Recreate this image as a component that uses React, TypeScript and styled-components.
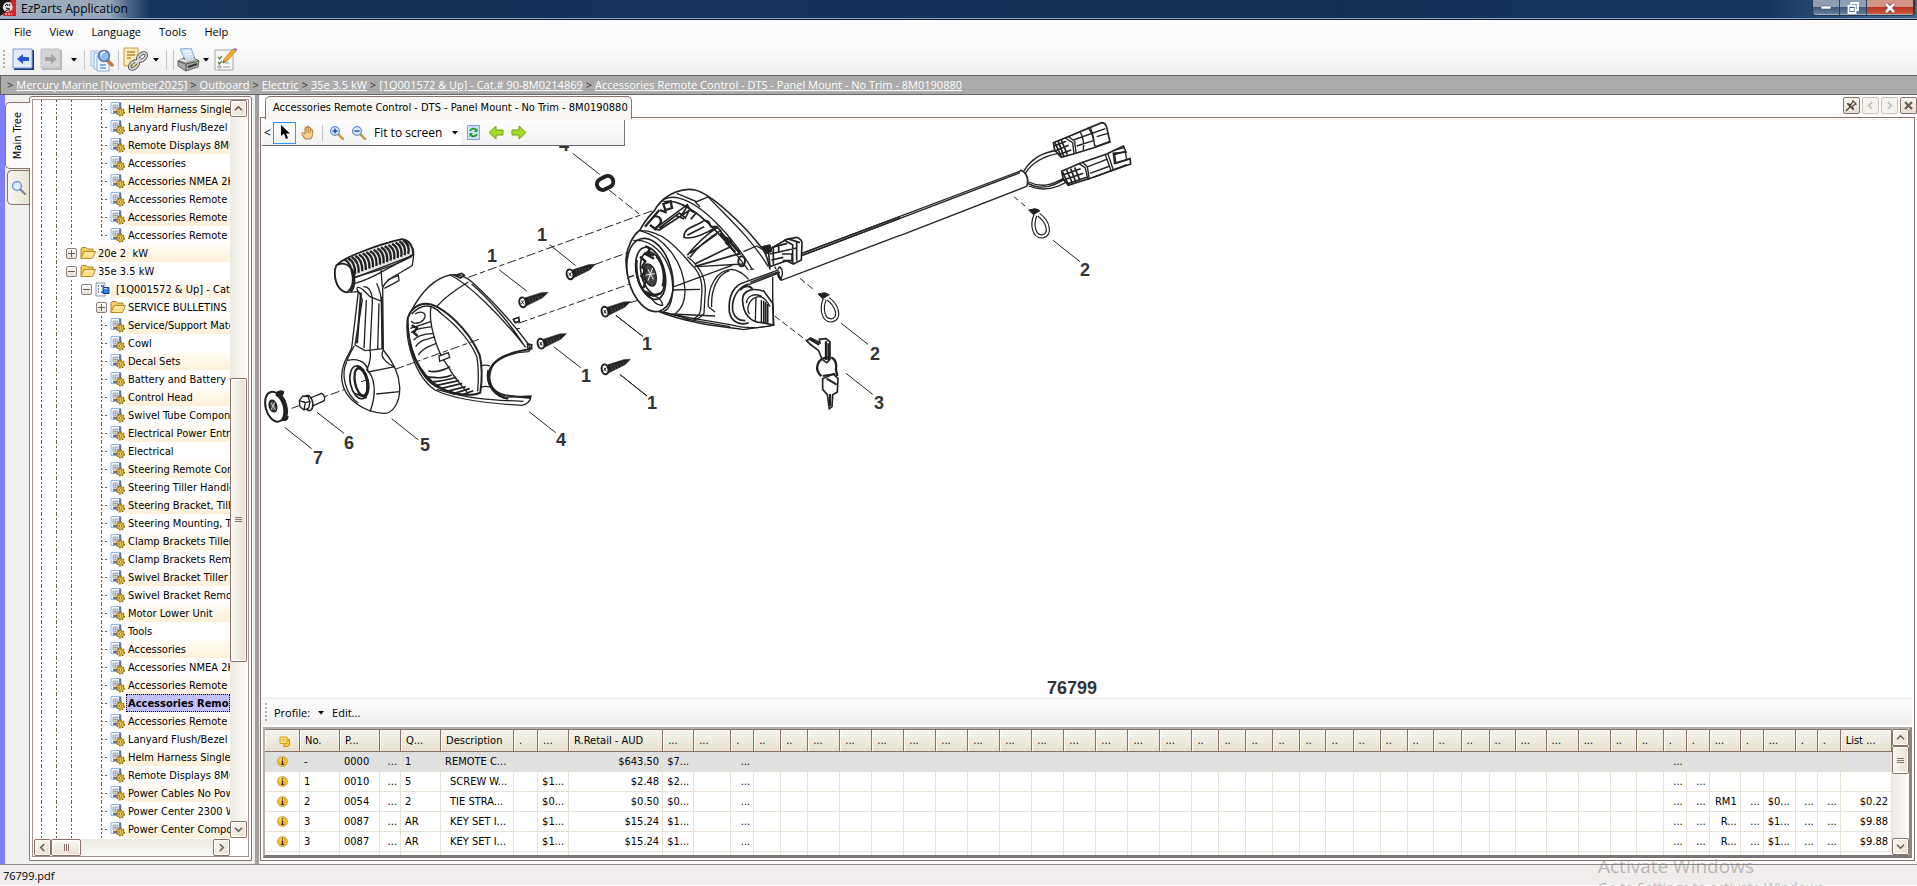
import React from 'react';
import styled, { createGlobalStyle, css } from 'styled-components';

const brown = '#88726a';
const tahoma = '"DejaVu Sans Condensed", "DejaVu Sans", sans-serif';
const segoe = '"Open Sans", "Noto Sans", sans-serif';

const GlobalStyle = createGlobalStyle`
  * { box-sizing: border-box; }
  html, body { margin: 0; height: 100%; }
  #root { height: 100%; }
  body { font: 11px/18px ${tahoma}; color: #000; background: #f0f0f0; overflow: hidden; }
  button, select { font: inherit; color: inherit; margin: 0; padding: 0; border: 0; background: none; }
  button { display: flex; align-items: center; justify-content: center; }
  svg { display: block; flex: none; }
`;

const Window = styled.div`
  position: relative;
  display: flex;
  flex-direction: column;
  height: 100vh;
  overflow: hidden;
`;

/* ---------- title bar ---------- */
const TitleBar = styled.header`
  display: flex;
  height: 20px;
  flex: none;
  border-bottom: 1px solid #10182a;
  box-shadow: inset 0 -1px 0 #8ba3bd;
  background: linear-gradient(90deg, #a3b0c0 0, #97a6b8 110px, #4d678a 128px, #17365e 150px, #133055 280px, #14325a 35%, #122f55 70%, #15355f 92%, #35577f 97%, #48678c 100%);
`;
const AppName = styled.h1`
  flex: 1;
  margin: 0;
  padding-left: 5px;
  font: 12px/18px ${segoe};
`;
const WindowButtons = styled.div`
  display: flex;
  height: 16px;
  margin-right: 2px;
  border: 1px solid #24364e;
  border-top: 0;
  border-radius: 0 0 4px 4px;
  overflow: hidden;
`;
const WindowButton = styled.button<{ $close?: boolean }>`
  width: ${p => (p.$close ? 47 : 27)}px;
  height: 15px;
  border-right: 1px solid #2d3f58;
  box-shadow: inset 0 -1px 0 #9db0c6;
  background: ${p => (p.$close ? 'linear-gradient(#d59386 0 45%, #b8341c 46%, #cf5b3c)' : 'linear-gradient(#8e9fb4 0 45%, #3f5776 46%, #6682a2)')};
`;

/* ---------- menu, toolbar, breadcrumb ---------- */
const MenuBar = styled.nav`
  display: flex;
  flex: none;
  height: 24px;
  padding-left: 14px;
  gap: 18px;
  background: #fbfbfb;
  font: 11px/24px ${segoe};
`;
const MenuItem = styled.button``;

const ToolBar = styled.div`
  display: flex;
  flex: none;
  align-items: center;
  height: 31px;
  padding-left: 3px;
  background: linear-gradient(#fcfcfc, #efefef);
`;
const Grip = styled.span<{ $gap: number }>`
  width: 2px;
  height: 20px;
  margin-right: ${p => p.$gap}px;
  background: repeating-linear-gradient(#b4b4b4 0 2px, transparent 2px 4px);
`;
const ToolButton = styled.button<{ $w: number }>`
  width: ${p => p.$w}px;
  height: 24px;
`;
const Divider = styled.span<{ $h: number }>`
  width: 1px;
  height: ${p => p.$h}px;
  margin: 0 3px;
  background: #c4c4c4;
`;

const Breadcrumb = styled.nav`
  display: flex;
  flex: none;
  gap: 3px;
  height: 20px;
  padding-left: 6px;
  border: 1px solid #666;
  border-right: 0;
  background: #ababab;
  color: #333;
  font: 11px/18px ${segoe};
  white-space: nowrap;
  a { color: #fff; }
`;

/* ---------- main split ---------- */
const Main = styled.main`
  display: flex;
  flex: 1;
  min-height: 0;
`;
const Rail = styled.div`
  flex: none;
  width: 29px;
  padding-top: 7px;
  border-left: 5px solid #8080ff;
`;
const RailTab = styled.button<{ $active?: boolean }>`
  width: ${p => (p.$active ? 25 : 22)}px;
  height: ${p => (p.$active ? 67 : 35)}px;
  margin: 0 0 1px ${p => (p.$active ? 0 : 2)}px;
  position: relative;
  z-index: ${p => (p.$active ? 1 : 0)};
  border: 1px solid ${brown};
  border-right: 0;
  border-radius: 5px 0 0 5px;
  background: ${p => (p.$active ? '#fbfaf8' : 'linear-gradient(90deg, #f8f6f0, #e8e2d2)')};
  span { writing-mode: vertical-rl; transform: rotate(180deg); white-space: nowrap; }
`;
const TreePanel = styled.section`
  display: flex;
  flex: none;
  width: 223px;
  margin: 1px 3px 3px 0;
  padding: 2px 2px 3px;
  border: 1px solid ${brown};
  border-radius: 3px 3px 1px 1px;
  background: #fff;
`;
const TreeFrame = styled.div`
  display: grid;
  grid-template: minmax(0, 1fr) 18px / minmax(0, 1fr) 17px;
  width: 100%;
  padding: 0 1px;
  border: 1px solid #a3938b;
  background: #fff;
`;
const Tree = styled.ul`
  margin: 0;
  padding: 0;
  list-style: none;
  overflow: hidden;
`;
const TreeRow = styled.li`
  display: flex;
  height: 18px;
  white-space: nowrap;
`;
const dots = (dir: string) => `repeating-linear-gradient(${dir}, #6b6246 0 2px, transparent 2px 4px)`;
const Guide = styled.span<{ $kind: string }>`
  flex: none;
  display: flex;
  align-items: center;
  justify-content: center;
  width: 15px;
  background-repeat: no-repeat;
  ${p => p.$kind === 'line' && css`background-image: ${dots('180deg')}; background-size: 1px 18px; background-position: 7px 0;`}
  ${p => p.$kind === 'tee' && css`background-image: ${dots('180deg')}, ${dots('90deg')}; background-size: 1px 18px, 8px 1px; background-position: 7px 0, 7px 9px;`}
  ${p => p.$kind === 'end' && css`background-image: ${dots('180deg')}, ${dots('90deg')}; background-size: 1px 10px, 8px 1px; background-position: 7px 0, 7px 9px;`}
`;
const Expander = styled.button`
  width: 11px;
  height: 11px;
  border: 1px solid #8d8078;
  border-radius: 2px;
  background: linear-gradient(#fff, #e6e0d6);
`;
const IconCell = styled.span`
  flex: none;
  display: flex;
  align-items: center;
  justify-content: center;
  width: 17px;
`;
const TreeLabel = styled.span<{ $shaded: boolean; $selected?: boolean; $pad: number }>`
  flex: 1;
  min-width: 0;
  padding-left: ${p => p.$pad}px;
  line-height: 20px;
  white-space: pre;
  overflow: hidden;
  background: ${p => (p.$shaded ? 'linear-gradient(#fffdf8, #fdf0d9)' : 'none')};
  ${p => p.$selected && css`
    background: #c3c1fb;
    outline: 1px dotted #000;
    outline-offset: -1px;
    font-weight: bold;
  `}
`;

/* ---------- scroll bars ---------- */
const Scroll = styled.div<{ $across?: boolean }>`
  display: flex;
  flex-direction: ${p => (p.$across ? 'row' : 'column')};
  background: linear-gradient(${p => (p.$across ? '180deg' : '90deg')}, #edeae2, #fbfaf7);
  ${p => p.$across && 'margin-top: 1px;'}
`;
const ScrollButton = styled.button`
  flex: none;
  width: 17px;
  height: 17px;
  border: 1px solid ${brown};
  border-radius: 2px;
  box-shadow: inset 0 0 0 1px #fff;
  background: linear-gradient(135deg, #faf8f3, #e5dfd0);
`;
const Track = styled.span<{ $grow: number }>`
  flex: ${p => p.$grow} 1 0;
`;
const Thumb = styled.button<{ $grow?: number; $size?: number; $across?: boolean }>`
  ${p => (p.$grow ? `flex: ${p.$grow} 1 0;` : `flex: none; ${p.$across ? 'width' : 'height'}: ${p.$size}px;`)}
  border: 1px solid ${brown};
  border-radius: 2px;
  box-shadow: inset 0 0 0 1px #fff;
  background: linear-gradient(${p => (p.$across ? '180deg' : '90deg')}, #faf8f3, #e7e1d1);
`;

const Splitter = styled.div`
  flex: none;
  width: 5px;
  border-right: 1px solid #f3f0ec;
  background: #9f9f9f;
`;

/* ---------- document area ---------- */
const Content = styled.section`
  display: flex;
  flex: 1;
  flex-direction: column;
  min-width: 0;
  background: #fff;
`;
const TabStrip = styled.div`
  display: flex;
  flex: none;
  justify-content: space-between;
  height: 22px;
  padding-left: 5px;
`;
const DocumentTab = styled.button`
  position: relative;
  z-index: 1;
  height: 23px;
  margin-top: 1px;
  padding: 0 3px 0 7px;
  border: 1px solid ${brown};
  border-bottom: 0;
  border-radius: 5px 5px 0 0;
  background: #f8f6f3;
`;
const TabButtons = styled.div`
  display: flex;
  gap: 2px;
  padding-top: 2px;
`;
const TabButton = styled.button<{ $off?: boolean }>`
  width: 17px;
  height: 17px;
  border: 1px solid ${p => (p.$off ? '#c9c1bb' : brown)};
  border-radius: 2px;
  color: ${p => (p.$off ? '#c4bcb6' : '#5f4a40')};
  background: ${p => (p.$off ? '#f5f3f0' : 'linear-gradient(#f8f6f1, #e6e0d2)')};
`;
const Panel = styled.div`
  display: flex;
  flex: 1;
  flex-direction: column;
  min-height: 0;
  margin: 0 2px 3px 0;
  padding: 1px 2px 2px 1px;
  border: 1px solid ${brown};
  background: #fff;
`;
const Viewer = styled.div`
  position: relative;
  flex: 1;
  min-height: 0;
  overflow: hidden;
  border-top: 1px solid #f6f3ef;
  border-bottom: 3px solid #f0f0f0;
`;
const FloatBar = styled.div`
  position: absolute;
  left: 0;
  top: 0;
  display: flex;
  align-items: center;
  width: 363px;
  height: 26px;
  border-right: 1px solid #777;
  border-bottom: 1px solid #666;
  background: linear-gradient(#fdfdfd, #f1f1f1);
  font: 12px/24px ${segoe};
`;
const FloatButton = styled.button<{ $on?: boolean; $w: number }>`
  width: ${p => p.$w}px;
  height: 22px;
  border: ${p => (p.$on ? '1px solid #3397ff' : 0)};
`;
const ZoomPicker = styled.label`
  display: flex;
  align-items: center;
  width: 91px;
  height: 24px;
  margin-right: 5px;
  background: #fff;
  select {
    appearance: none;
    flex: 1;
    padding-left: 4px;
    font-size: 12px;
    outline: 0;
  }
  svg { margin-right: 3px; }
`;
const ProfileBar = styled.div`
  display: flex;
  flex: none;
  align-items: center;
  height: 25px;
  padding-left: 3px;
  background: linear-gradient(#fcfcfc, #f0f0f0);
  font: 11px/24px ${segoe};
`;
const ProfileButton = styled.button`
  gap: 8px;
  padding-right: 8px;
`;

/* ---------- parts table ---------- */
const GridFrame = styled.div`
  display: flex;
  flex: none;
  margin: 2px 0 0 1px;
  height: 131px;
  border: 2px solid #a8a4a2;
  border-width: 2px 3px 3px 2px;
  border-color: #b4b0ae #8b8685 #7a7476 #b4b0ae;
  background: #fff;
`;
const GridClip = styled.div`
  flex: 1;
  min-width: 0;
  overflow: hidden;
`;
const Grid = styled.table`
  width: 100%;
  table-layout: fixed;
  border-collapse: separate;
  border-spacing: 0;
`;
const HeadCell = styled.th`
  height: 23px;
  padding: 1px 0 0 5px;
  border: 1px solid ${brown};
  border-left: 0;
  box-shadow: inset 1px 1px 0 #fbfaf6;
  background: linear-gradient(#f6f4ef, #e6e0cf);
  font-weight: normal;
  text-align: left;
  line-height: 20px;
  white-space: nowrap;
  overflow: hidden;
`;
const Cell = styled.td<{ $right?: boolean; $indent?: boolean }>`
  height: 20px;
  padding: 0 3px 0 ${p => (p.$indent ? 9 : 4)}px;
  border-right: 1px solid #e6e2d6;
  border-bottom: 1px solid #e6e2d6;
  line-height: 19px;
  text-align: ${p => (p.$right ? 'right' : 'left')};
  white-space: nowrap;
  overflow: hidden;
`;
const PartRow = styled.tr<{ $current?: boolean }>`
  background: ${p => (p.$current ? '#e0e0e0' : '#fff')};
`;
const Centered = styled.span`
  display: flex;
  justify-content: center;
`;

/* ---------- status ---------- */
const StatusBar = styled.footer`
  flex: none;
  height: 22px;
  padding-left: 3px;
  border-top: 1px solid #8f8b8b;
  border-bottom: 1px solid #fff;
  background: #f0edec;
  font: 11px/22px ${segoe};
`;
const Watermark = styled.aside`
  position: absolute;
  left: 1598px;
  top: 855px;
  color: rgba(130, 125, 125, 0.5);
  font: 19px/22px ${segoe};
  white-space: nowrap;
  pointer-events: none;
  p { margin: 0; }
  p + p { font-size: 14px; line-height: 22px; }
`;

/* ---------- small icons ---------- */
const Caret = () => <svg width="6" height="4" viewBox="0 0 6 4"><path d="M0 0h6L3 3.5z" /></svg>;

const Chevron = ({ turn = 0, color = '#6d5a50' }) => (
  <svg width="9" height="9" viewBox="0 0 9 9" fill="none" stroke={color} strokeWidth="1.6">
    <path d="M1 6.2 4.5 2.8 8 6.2" transform={`rotate(${turn} 4.5 4.5)`} />
  </svg>
);

const Ribs = ({ turn = 0 }) => (
  <svg width="9" height="9" viewBox="0 0 9 9" stroke="#88726a">
    <path d="M1 2.5h7M1 4.5h7M1 6.5h7" transform={`rotate(${turn} 4.5 4.5)`} />
  </svg>
);

const LogoIcon = () => (
  <svg width="16" height="16" viewBox="0 0 16 16">
    <path d="M0 0h16v16H4L0 12z" fill="#d5232b" />
    <path d="M0 0h11L8 6l-5 8-3 2z" fill="#151515" />
    <path d="M3 6C4 2 9 1 11 3s2 5 1 7l-4 2c-3 0-6-3-5-6z" fill="#ddd" />
    <path d="M5 6l2-2 1 2M9 4l1 2M6 8l4 1M7 10h3M4 13l3-3" stroke="#111" fill="none" />
    <path d="M5 14h7" stroke="#fff" strokeDasharray="2 1" />
  </svg>
);

const NavIcon = ({ forward = false }) => (
  <svg width="23" height="23" viewBox="0 0 23 23">
    <path d="M2 2h20v20H2z" fill={forward ? '#b9b9b9' : '#1d3b86'} />
    <path d="M1 1h19v19H1z" fill={forward ? '#d4d4d4' : '#e3ebf8'} stroke={forward ? '#c2c2c2' : '#7d9bd0'} />
    <path
      d="M5 11l6-5v3h6v4h-6v3z"
      fill={forward ? '#a3a3a3' : '#2456dd'}
      transform={forward ? 'rotate(180 11 11)' : undefined}
    />
  </svg>
);

const FindPagesIcon = () => (
  <svg width="24" height="24" viewBox="0 0 24 24">
    <path d="M1 3h11v15H1z" fill="#e9f1fc" stroke="#9dbbe4" />
    <path d="M4 5h12v16H4z" fill="#eef5fe" stroke="#8fb1df" />
    <path d="M7 8h12v15H7z" fill="#f6faff" stroke="#86a9da" />
    <path d="M10 17h6M10 20h6" stroke="#5b95dc" strokeWidth="1.5" />
    <path d="M17 12l5 5" stroke="#c9743a" strokeWidth="3.4" strokeLinecap="round" />
    <circle cx="14" cy="8" r="5.4" fill="#8fbdf0" stroke="#56789f" strokeWidth="1.6" />
    <path d="M11 7c0-2 2-3 4-3" stroke="#fff" strokeWidth="1.4" fill="none" />
  </svg>
);

const LinkNoteIcon = () => (
  <svg width="25" height="25" viewBox="0 0 25 25">
    <path d="M1 1h14v13l-4 5H1z" fill="#fbe9be" stroke="#cf9c3c" />
    <path d="M4 5h8M4 8h8M4 11h4" stroke="#b88432" strokeWidth="1.5" />
    <g fill="none" stroke="#555" strokeWidth="3.6">
      <ellipse cx="19" cy="10" rx="3" ry="5" transform="rotate(48 19 10)" />
      <ellipse cx="11" cy="18" rx="3" ry="5" transform="rotate(48 11 18)" />
      <path d="M12 17l6-6" />
    </g>
    <g fill="none" stroke="#d8d8d8" strokeWidth="1.8">
      <ellipse cx="19" cy="10" rx="3" ry="5" transform="rotate(48 19 10)" />
      <ellipse cx="11" cy="18" rx="3" ry="5" transform="rotate(48 11 18)" />
      <path d="M12 17l6-6" />
    </g>
  </svg>
);

const PrinterIcon = () => (
  <svg width="24" height="24" viewBox="0 0 24 24">
    <path d="M3 1l11-1 4 11-9 3z" fill="#cfe2fb" stroke="#86a9d8" />
    <path d="M7 4l7-1M8 7l7-1" stroke="#fff" />
    <path d="M1 13l6-3 1 3 9-3 5 3-1 6-12 4-8-5z" fill="#aaa" stroke="#666" />
    <path d="M1 13l8 3 13-3M9 16v7" stroke="#555" fill="none" />
    <path d="M2 12l6 2 11-3-3-1-8 2-2-1z" fill="#e4e4e4" />
    <path d="M11 19l9-3" stroke="#333" strokeWidth="2" />
    <circle cx="19" cy="14" r="1" fill="#5fd04a" />
  </svg>
);

const ChecklistIcon = () => (
  <svg width="24" height="24" viewBox="0 0 24 24">
    <path d="M1 2h18v20H1z" fill="#f7f7f7" stroke="#a5a5a5" />
    <path d="M4 9l1.500 2 2.500-3M4 14l1.500 2 2.500-3" stroke="#4a8a3c" strokeWidth="1.300" fill="none" />
    <path d="M4 18h3v2H4zM9 19h7M11 15h4" stroke="#999" fill="none" />
    <path d="M9 15l1-4L19 1l3 2-9 10z" fill="#f6a53d" stroke="#c97a1e" strokeWidth=".8" />
    <path d="M19 1l3 2 1.500-1.800L21 0z" fill="#9b6ac9" />
    <path d="M9 15l.6-2.200 1.400 1.200z" fill="#333" />
  </svg>
);

const AssemblyIcon = () => (
  <svg width="16" height="16" viewBox="0 0 16 16">
    <path d="M1 1.500h10v11H1z" fill="#fff" stroke="#8db5ea" />
    <path d="M3 4h5v5H3z" fill="#dfe6ef" stroke="#8a97a8" strokeWidth=".8" />
    <path d="M3 6.500h5M5.500 4v5" stroke="#8a97a8" strokeWidth=".7" />
    <path d="M10 2v7M3 11h5" stroke="#35477d" strokeWidth="1.400" />
    <circle cx="10.500" cy="11" r="3.600" fill="#f3c93d" stroke="#8f6a12" strokeWidth="1.800" strokeDasharray="1.600 1.100" />
    <circle cx="10.500" cy="11" r="3" fill="#f3c93d" stroke="#a87f1d" strokeWidth=".7" />
    <circle cx="10.500" cy="11" r="1.200" fill="#fff" stroke="#7e5d10" strokeWidth=".8" />
  </svg>
);

const FolderIcon = () => (
  <svg width="16" height="14" viewBox="0 0 16 14">
    <path d="M1 12.500V3l1-1.500h4L7.500 3H13v3" fill="#f2cd62" stroke="#a98020" />
    <path d="M1 12.500L4 5.500h11.500L12.500 12.500z" fill="#ffe08a" stroke="#b88c26" />
    <path d="M5 7h8" stroke="#fff4c8" />
  </svg>
);

const CatalogIcon = () => (
  <svg width="15" height="15" viewBox="0 0 15 15">
    <path d="M1 1h9v13H1z" fill="#f5f7fa" stroke="#8d99a8" />
    <path d="M3 4h1M3 7h1M3 10h1M6 4h3M6 10h2" stroke="#39547e" strokeWidth="1.400" />
    <path d="M8 5.500h6v6H8z" fill="#2f86ee" stroke="#123f86" />
    <path d="M9 6.500h3" stroke="#b7d9ff" />
  </svg>
);

const MagnifierIcon = ({ sign = '' }) => (
  <svg width="16" height="16" viewBox="0 0 16 16">
    <path d="M9 9l5 5" stroke={sign ? '#c98f3e' : '#7f8a95'} strokeWidth="2.400" strokeLinecap="round" />
    <circle cx="6" cy="6" r="4.400" fill="#dbeafd" stroke="#5f90cc" strokeWidth="1.300" />
    {sign && <path d={sign === '+' ? 'M3.500 6h5M6 3.500v5' : 'M3.500 6h5'} stroke="#1c4fa8" strokeWidth="1.500" />}
  </svg>
);

const PointerIcon = () => (
  <svg width="10" height="15" viewBox="0 0 10 15"><path d="M1 0v11l3-2.500L6 14l2-1-2-4.500h4z" /></svg>
);

const HandIcon = () => (
  <svg width="14" height="16" viewBox="0 0 14 16">
    <path d="M4 14L1 9c-1-1 .500-2 1.500-1L4 9V3c0-1 1.600-1 1.800 0V2c0-1.200 1.800-1.200 1.800 0v1c.2-1 1.800-1 1.800.2V4.500c.3-.8 1.800-.8 1.800.3 1 4 .6 6-1.200 9z" fill="#f6d28a" stroke="#a8782c" />
    <path d="M5.800 3v5M7.600 3v5M9.400 4.500V8" stroke="#a8782c" strokeWidth=".7" />
  </svg>
);

const RefreshIcon = () => (
  <svg width="13" height="15" viewBox="0 0 13 15">
    <path d="M.5.5h12v14H.5z" fill="#cfe0f8" stroke="#7fa3d4" />
    <path d="M3 6c1-3 5-3 6-1M10 9c-1 3-5 3-6 1" stroke="#1f9a2a" strokeWidth="1.800" fill="none" />
    <path d="M10.500 3v4H7zM2.500 12V8H6z" fill="#1f9a2a" />
  </svg>
);

const GreenArrow = ({ right = false }) => (
  <svg width="16" height="15" viewBox="0 0 16 15">
    <path d="M1 7.500L8 1v4h7v5H8v4z" fill="#a4dc23" stroke="#6ea411" transform={right ? 'rotate(180 8 7.500)' : undefined} />
  </svg>
);

const NotesIcon = () => (
  <svg width="12" height="11" viewBox="0 0 12 11">
    <path d="M5 3.500h5.500V9L9 10.500H5z" fill="#f6c93b" stroke="#c2920f" />
    <path d="M1 1h7v6.500H1z" fill="#ffec9c" stroke="#d3a012" />
    <path d="M2.500 3h4M2.500 5h4" stroke="#c79a1c" strokeWidth=".8" />
  </svg>
);

const InfoIcon = () => (
  <svg width="11" height="11" viewBox="0 0 11 11">
    <circle cx="5.500" cy="5.500" r="5" fill="#f0b92d" stroke="#cf9a33" strokeWidth=".8" />
    <circle cx="4.500" cy="3.800" r="2.500" fill="#fbe08e" opacity=".6" />
    <path d="M5.500 2v1.500M4.500 5h1v3M4.300 8.300h2.600" stroke="#3d2a05" strokeWidth="1.200" fill="none" />
  </svg>
);

const PinIcon = () => (
  <svg width="13" height="13" viewBox="0 0 13 13" fill="none" stroke="#4e3c34" strokeWidth="1.100">
    <path d="M1 12l4-4M7.500 1.500l4 4M8 2L6 5.500 3 5l5 5-.5-3L11 5M4 7L7 4.500" />
    <path d="M2.500 4.500l6 6" strokeWidth="1.400" />
  </svg>
);

/* ---------- exploded view ---------- */
const range = (n: number) => Array.from({ length: n }, (_, i) => i);

const Screw = ({ x, y }: { x: number; y: number }) => (
  <g transform={`translate(${x} ${y})`}>
    <path d="M4 -12 L56 -29 L76 -30 L60 -14 L8 12z" fill="#222" stroke="#222" strokeWidth="2" strokeLinejoin="round" />
    <path d="M18 -13l6 16M27 -15l5 14M36 -17l4 12M45 -19l4 10M54 -22l3 8" stroke="#888" strokeWidth="1.200" />
    <ellipse rx="10" ry="15" transform="rotate(-12)" fill="#fff" strokeWidth="6" />
    <path d="M-4 -5L4 6M4 -6L-4 5" strokeWidth="3" />
  </g>
);

const TieStrap = ({ x, y }: { x: number; y: number }) => (
  <g transform={`translate(${x} ${y})`}>
    <path d="M4 10C-8 40 0 76 26 73C52 68 44 30 14 8" strokeWidth="13" />
    <path d="M4 10C-8 40 0 76 26 73C52 68 44 30 14 8" stroke="#fff" strokeWidth="6" />
    <path d="M-16 -6L4 -10 18 -4 -2 8z" fill="#222" strokeWidth="3" />
  </g>
);

const HandleAndCowl = () => (
  <g transform="translate(255 110) scale(.33333)">
    <path
      strokeWidth="3"
      d="M953 130L1034 193M884 404L962 467M733 480L815 543M1083 616L1163 679M896 710L977 773M1096 794L1176 858M822 905L902 968M410 926L490 990M186 907L267 970M89 952L170 1016"
    />
    <path strokeWidth="3" strokeDasharray="28 9 16 9" d="M640 502L1240 285M1062 240L1155 314M1018 464L1115 429M790 640L1130 520M1125 578L1180 562M110 895L270 838M420 778L680 685" />
    <path strokeWidth="3" d="M660 690C710 672 750 662 795 655" />
    <rect x="1025" y="202" width="51" height="34" rx="17" transform="rotate(-27 1050 219)" strokeWidth="12" />

    <Screw x={945} y={493} />
    <Screw x={803} y={577} />
    <Screw x={858} y={701} />
    <Screw x={1050} y={605} />
    <Screw x={1050} y={778} />

    {/* end cap */}
    <g>
      <path d="M62 848l14-6 10 2-2 10-12 6M84 918l16 2-4 10-16 2" fill="#222" strokeWidth="3" />
      <ellipse cx="60" cy="890" rx="28" ry="46" transform="rotate(-16 60 890)" fill="#fff" strokeWidth="6" />
      <path d="M64 850C88 862 100 904 86 930" strokeWidth="14" />
      <ellipse cx="54" cy="888" rx="10" ry="17" transform="rotate(-16 54 888)" fill="#555" strokeWidth="6" />
      <path d="M48 878l14 22M60 876l-12 24" stroke="#fff" strokeWidth="2" />
    </g>

    {/* bolt */}
    <path d="M166 864L200 850Q212 858 208 872L172 888z" fill="#fff" strokeWidth="4" />
    <ellipse cx="160" cy="879" rx="13" ry="23" transform="rotate(-12 160 879)" fill="#fff" strokeWidth="5" />
    <path d="M133 872l10-14 16 2 6 16-4 18-14 6-12-10zM133 872l18 6 14-4M151 878l-4 22" fill="#fff" strokeWidth="4" />

    {/* handle */}
    <g strokeWidth="4">
      <path d="M245 465C270 438 380 400 440 387C464 388 478 412 476 436L472 466C440 490 390 505 383 535L385 720C410 750 432 790 434 830C436 880 410 914 385 910C330 906 262 870 260 800C260 765 275 745 290 715L310 545L275 547C245 540 236 510 240 478z" fill="#fff" />
      <path d="M250 462C275 438 380 402 440 388C462 390 474 412 474 432C440 462 370 480 300 502C298 480 284 462 250 462z" fill="#e8e8e8" />
      {range(17).map(i => (
        <path key={i} d={`M${268 + i * 11} ${448 - i * 3.6}q22 12 ${22 - i * 0.4} ${48 - i * 0.4}`} strokeWidth="7" />
      ))}
      <path d="M244 466C262 456 284 462 290 482C296 510 292 536 276 547C250 545 238 512 240 480z" fill="#fff" strokeWidth="5" />
      <path d="M290 480C300 500 300 530 286 545" strokeWidth="9" />
      <path d="M300 503L474 436M300 520C360 505 380 480 470 440M310 545C300 530 310 528 325 540L345 560L382 575M325 530C345 530 352 550 352 578L345 720C350 750 340 770 335 780M365 520C378 550 378 560 382 600M378 480L382 530M398 510L430 496L432 512L388 535M312 545L322 570L300 705L330 722L385 716M334 570L327 715M372 580L368 720M298 708C285 730 280 740 276 752C300 745 335 750 340 786L420 770M335 780C360 800 366 850 345 905M364 852L434 845M385 720C372 740 395 760 420 772" />
      <path d="M318 548L306 700M380 560L382 716" strokeWidth="6" />
      <path d="M275 755C258 790 268 850 310 880" />
      <ellipse cx="313" cy="817" rx="27" ry="50" transform="rotate(-12 313 817)" strokeWidth="5" />
      <ellipse cx="318" cy="816" rx="18" ry="42" transform="rotate(-12 318 816)" strokeWidth="7" />
      <path d="M305 770C330 770 345 815 332 862L310 850M298 850L335 864" strokeWidth="5" />
      <path d="M318 815L340 808" strokeWidth="3" />
    </g>

    {/* cowl */}
    <g strokeWidth="4">
      <path d="M470 600C500 545 540 505 585 495C610 490 640 505 650 515C700 560 770 635 822 705C828 712 826 722 820 725C780 726 735 740 715 765C690 810 712 850 750 862L828 858C828 872 815 884 800 886C690 880 590 865 540 840C480 800 448 690 458 625z" fill="#fff" />
      <path d="M458 625C470 585 510 570 545 590C600 620 650 680 674 735C682 770 680 820 676 848C650 862 590 852 545 830C490 800 456 700 458 625z" strokeWidth="6" />
      <path d="M470 612C500 580 530 580 560 612C610 650 650 700 666 742C672 780 670 820 668 844" />
      <path d="M545 590C570 560 600 540 640 516M676 768C690 764 700 766 705 768M678 832C690 826 700 830 712 832M585 495C640 520 740 620 812 712M650 522C700 565 765 640 806 704" />
      <path d="M824 718C770 726 720 744 706 775C692 815 712 848 750 856L828 864M700 780C690 830 725 862 760 866" strokeWidth="6" />
      <path d="M600 496l20-6 8 6-12 8zM775 628l16-6 2 12-12 4zM818 702l12 2v12l-12-2z" strokeWidth="5" />
      <path d="M528 590C520 630 540 720 580 770C600 810 625 830 640 852M480 612C500 600 520 610 505 630C490 645 470 640 470 632M466 655L530 634M468 668C490 650 510 655 530 650M476 690C495 670 520 672 536 670M482 710C500 684 520 690 540 680M490 735C510 706 530 710 545 698" />
      <path d="M470 646l16 8-10 14 12 10" strokeWidth="7" />
      <path strokeWidth="3" strokeDasharray="28 9 16 9" d="M470 760L680 685" />
      <path d="M552 738l28-10 4 14-30 12z" fill="#fff" />
      <path d="M520 782C540 790 570 780 585 770M512 800C550 805 570 805 590 795M535 815C560 815 590 806 604 802M545 826L612 812M556 836L622 820M575 844L632 830M598 850L644 836M620 854L655 842" strokeWidth="5" />
      <path d="M464 700C480 770 530 835 600 852" strokeWidth="7" />
      <path d="M545 838C640 866 700 870 806 874" />
    </g>
  </g>
);

const ControlHead = () => (
  <g transform="translate(600 110) scale(.33333)">
    <path strokeWidth="3" d="M47 616L128 679M60 794L141 858M724 640L804 703M738 790L818 853" />
    <path strokeWidth="3" strokeDasharray="20 9" d="M600 505L645 542M524 618L620 692" />

    {/* harness stub and plug */}
    <path d="M505 420L560 388 590 382Q606 388 606 400L604 450 580 462 560 452 510 470z" fill="#fff" strokeWidth="5" />
    <path d="M516 412L562 400M510 432L590 414M514 450L550 442M552 390L578 404V460M562 386L600 398M546 432h30v20h-28M590 392V452M520 410v54M536 404v20" strokeWidth="5" />
    <path d="M484 410l26-6 6 20-18 8z" fill="#222" strokeWidth="3" />
    <path d="M606 430L900 320M606 436L900 325" strokeWidth="4" />
    <path d="M538 470C530 480 530 500 544 511L900 376M538 470C552 480 548 500 540 511M524 470L545 510" strokeWidth="4" />

    {/* mounting body */}
    <path d="M120 360C140 320 165 305 170 290C200 250 250 232 285 240C330 250 430 340 490 420C508 450 516 490 517 560L520 645L430 658C360 650 260 640 165 600C110 570 78 520 78 450C80 410 100 375 120 360z" fill="#fff" strokeWidth="5" />
    <path d="M175 285C190 262 215 258 240 265C310 285 400 380 465 492M190 275C260 262 350 350 452 490M230 250L290 275L326 260M320 256C380 320 450 380 505 470M430 425L470 408L490 420M285 275L300 290" strokeWidth="4" />
    <path d="M190 282l22-8 4 20-20 6zM180 300l20 8M160 320C175 315 200 330 165 356" strokeWidth="7" />
    <path d="M165 356L262 284L270 300L178 360zM262 284L255 300 240 322M240 310l16 14 12-24 20 10-16 18M230 318l22 8M178 354L240 308" strokeWidth="5" />
    <path d="M252 382C250 350 290 350 312 332Q330 330 332 350L350 350C320 372 270 390 252 382zM262 376L312 350M262 436C290 400 325 370 352 352L362 362C330 382 292 412 270 442M270 430L350 372M284 462C330 440 370 420 392 410L372 384 362 362M284 470L420 430M360 372l40 34 20 26-30 6M372 382l18 4 8 20" strokeWidth="5" />
    <path d="M362 368L420 428M376 396l30 30M170 360L150 345M135 350L178 300" strokeWidth="7" />
    <ellipse cx="425" cy="454" rx="10" ry="15" strokeWidth="6" />
    <ellipse cx="456" cy="486" rx="6" ry="9" strokeWidth="5" />
    <path d="M120 362C200 360 250 440 285 475Q306 500 306 540L302 600Q298 625 270 628L190 606M290 470L430 462M210 540L300 538M222 530L400 465" strokeWidth="4" />
    <path d="M262 440Q316 480 316 540L312 610Q300 626 280 630" strokeWidth="4" />

    {/* bezel */}
    <ellipse cx="150" cy="495" rx="66" ry="112" transform="rotate(-14 150 495)" fill="#fff" strokeWidth="5" />
    <path d="M100 392C150 385 200 430 215 500C225 560 210 600 190 604M120 362C190 380 250 450 255 540Q256 590 225 612" strokeWidth="4" />
    <ellipse cx="152" cy="490" rx="42" ry="80" transform="rotate(-14 152 490)" strokeWidth="5" />
    <ellipse cx="158" cy="490" rx="34" ry="66" transform="rotate(-14 158 490)" strokeWidth="5" />
    <ellipse cx="150" cy="495" rx="18" ry="34" transform="rotate(-14 150 495)" fill="#444" strokeWidth="4" />
    <path d="M120 440l16 14-10 18 12 10-14 16 14 14-8 22M136 408l14 8-8 14 20 6M132 430l30 16M135 545l24 12 26-8M110 450C105 500 120 540 150 560M170 440C190 460 196 500 188 530" strokeWidth="7" />
    <path d="M144 478l16 30M158 474l-14 38M138 495l26-4" stroke="#fff" strokeWidth="3" />
    <path d="M86 502l16-6M160 556Q185 565 188 585Q170 590 150 560" strokeWidth="4" />

    {/* key switch */}
    <path d="M430 480L540 478 520 500V645L430 656 350 640 325 590C322 530 350 480 395 478z" fill="#fff" stroke="none" />
    <path d="M345 606L325 590C322 530 350 480 395 478C415 480 432 492 446 508M335 592C332 535 355 492 388 482M518 500V640" strokeWidth="4" />
    <path d="M436 516C400 524 384 560 388 606C394 636 420 648 446 638M446 522C412 532 394 566 398 602Q406 632 436 632" fill="#fff" strokeWidth="5" />
    <path d="M436 516L535 480M446 524L540 488M450 517L538 484" strokeWidth="4" />
    <path d="M420 540C440 520 460 530 456 545" strokeWidth="6" />
    <path d="M428 575C424 540 460 532 492 544L518 580 521 645 486 638C450 638 430 610 428 575z" fill="#fff" strokeWidth="5" />
    <path d="M440 580C440 556 466 548 486 560M448 612C438 596 446 570 468 562L466 634M468 562Q490 552 510 590M484 570V636M520 590V645" strokeWidth="4" />
    <path d="M491 572V638M497 576V639M503 582V640" strokeWidth="5" />
    <path d="M180 604C260 625 330 632 400 646Q450 660 518 646M250 626L390 650M215 612L345 618" strokeWidth="4" />

    <TieStrap x={670} y={558} />

    {/* keys */}
    <path d="M620 692l12-8 28 14-2-10 20-2 12 10v52l-10 10-14-10-10-26-26-20z" fill="#fff" strokeWidth="5" />
    <path d="M628 686l30 18M678 694V750M686 700V750" strokeWidth="7" />
    <path d="M686 742C650 742 642 780 664 798M694 742Q712 752 708 780L712 798" strokeWidth="7" />
    <path d="M668 806L700 792L714 806L712 846L698 854 696 890 688 896 682 854 668 838z" fill="#fff" strokeWidth="5" />
    <path d="M668 798L706 792M680 806L710 824M690 852V888" strokeWidth="6" />
  </g>
);

const Harness = () => (
  <g transform="translate(760 110) scale(.33333)">
    <path d="M125 430L786 181M128 436L780 188" strokeWidth="4" />
    <path d="M420 377L800 229" strokeWidth="4" />
    <path d="M780 180C800 185 808 210 800 229" strokeWidth="5" />
    <path d="M790 186C810 150 840 130 895 118M796 190C815 158 845 140 895 130M792 182C820 140 850 128 890 122" strokeWidth="4" />
    <path d="M804 220C840 240 880 236 930 196M806 228C850 246 890 238 934 206M806 216C840 232 870 230 920 200" strokeWidth="4" />

    <path d="M880 98L915 84 1025 38Q1036 38 1040 52L1050 96 1006 112 940 132 904 142 884 120z" fill="#fff" strokeWidth="5" />
    <path d="M884 96l20 44M894 92l18 48M904 90l18 44M882 108l36-14M886 122l40-16M894 134l40-14" strokeWidth="5" />
    <path d="M916 84l22 14 4 34M926 80l18 14 4 34M960 64Q974 90 970 120M984 52L996 72 1006 112M992 54Q1002 80 1004 108M940 90L1036 56M950 108L1000 92M1010 80L1044 70M1006 110L1050 94" strokeWidth="4" />

    <path d="M905 184L960 160 1040 132 1090 108 1098 126 1060 130 1064 160 1110 146 1112 162 1000 202 925 226 910 208z" fill="#fff" strokeWidth="5" />
    <path d="M908 186l18 40M920 180l18 42M932 176l16 42M944 172l16 40M906 196l56-20M910 210l60-20M920 222l60-20" strokeWidth="5" />
    <path d="M956 160l20 14 8 36M966 156l16 14 6 38M1036 134L1054 184M1044 132L1060 180M984 170L1040 148M990 190L1050 168M1064 134L1096 124 1100 150 1068 160zM1060 122L1094 112M1000 202L1100 164" strokeWidth="4" />

    <path d="M762 260L806 297" strokeWidth="3" strokeDasharray="16 12" />
    <path d="M879 391L960 455" strokeWidth="3" />
    <TieStrap x={822} y={306} />
  </g>
);

const callouts: [string, number, number][] = [
  ['4', 559, 151], ['1', 537, 241], ['1', 487, 262], ['1', 642, 350], ['1', 581, 382], ['1', 647, 409],
  ['2', 870, 360], ['3', 874, 409], ['4', 556, 446], ['5', 420, 451], ['6', 344, 449], ['7', 313, 464],
  ['2', 1080, 276], ['76799', 1047, 694],
];

const ExplodedView = () => (
  <svg width="100%" height="100%" role="img" aria-label="Exploded view 76799">
    <g transform="translate(-262 -120)" fill="none" stroke="#222">
      <HandleAndCowl />
      <ControlHead />
      <Harness />
      <g stroke="none" fill="#333" fontFamily='"Liberation Sans", sans-serif' fontWeight="bold" fontSize="18">
        {callouts.map(([t, x, y], i) => <text key={i} x={x} y={y}>{t}</text>)}
      </g>
    </g>
  </svg>
);

/* ---------- tree ---------- */
type Node = { text: string; guides: string[]; icon: 'leaf' | 'folder' | 'catalog'; sign?: '+' | '-'; selected?: boolean };
const leaf = (text: string, end = false): Node => ({ text, guides: ['line', 'line', 'line', 'none', end ? 'end' : 'tee'], icon: 'leaf' });

const nodes: Node[] = [
  ...['Helm Harness Single C', 'Lanyard Flush/Bezel M', 'Remote Displays 8M0', 'Accessories', 'Accessories NMEA 2K', 'Accessories Remote C', 'Accessories Remote C'].map(t => leaf(t)),
  leaf('Accessories Remote C', true),
  { text: '20e 2  kW', guides: ['line', 'line'], icon: 'folder', sign: '+' },
  { text: '35e 3.5 kW', guides: ['line', 'line'], icon: 'folder', sign: '-' },
  { text: '[1Q001572 & Up] - Cat.', guides: ['line', 'line', 'line'], icon: 'catalog', sign: '-' },
  { text: 'SERVICE BULLETINS', guides: ['line', 'line', 'line', 'none'], icon: 'folder', sign: '+' },
  ...['Service/Support Mate', 'Cowl', 'Decal Sets', 'Battery and Battery C', 'Control Head', 'Swivel Tube Compone', 'Electrical Power Entry', 'Electrical', 'Steering Remote Con', 'Steering Tiller Handle', 'Steering Bracket, Tille', 'Steering Mounting, Ti', 'Clamp Brackets Tiller H', 'Clamp Brackets Remo', 'Swivel Bracket Tiller H', 'Swivel Bracket Remot', 'Motor Lower Unit', 'Tools', 'Accessories', 'Accessories NMEA 2K', 'Accessories Remote C'].map(t => leaf(t)),
  { ...leaf('Accessories Remo'), selected: true },
  ...['Accessories Remote C', 'Lanyard Flush/Bezel M', 'Helm Harness Single C', 'Remote Displays 8M0', 'Power Cables No Pow', 'Power Center 2300 W', 'Power Center Compo'].map(t => leaf(t)),
];

const TreeItem = ({ node, index }: { node: Node; index: number }) => (
  <TreeRow role="treeitem" aria-selected={!!node.selected}>
    {node.guides.map((g, i) => <Guide key={i} $kind={g} />)}
    {node.sign && (
      <Guide $kind="none">
        <Expander aria-label={node.sign === '+' ? 'Expand' : 'Collapse'}>
          <svg width="7" height="7" viewBox="0 0 7 7" stroke="#6d5a50"><path d={node.sign === '+' ? 'M0 3.500h7M3.500 0v7' : 'M0 3.500h7'} /></svg>
        </Expander>
      </Guide>
    )}
    <IconCell>
      {node.icon === 'leaf' && <AssemblyIcon />}
      {node.icon === 'folder' && <FolderIcon />}
      {node.icon === 'catalog' && <CatalogIcon />}
    </IconCell>
    <TreeLabel $shaded={index % 2 === 0} $selected={node.selected} $pad={node.icon === 'catalog' ? 5 : 2}>{node.text}</TreeLabel>
  </TreeRow>
);

/* ---------- parts table data ---------- */
const columns: [string, number][] = [
  ['notes', 35], ['No.', 40], ['P...', 40], ['', 21], ['Q...', 40], ['Description', 73], ['.', 24], ['...', 31],
  ['R.Retail - AUD', 94], ['...', 31], ['...', 37], ['.', 23], ['..', 27], ['..', 27],
  ...range(12).map((): [string, number] => ['...', 32]),
  ...[27, 27, 27, 27, 26, 27, 27, 27, 26, 28, 28, 26].map((w): [string, number] => ['..', w]),
  ['...', 31], ['...', 32], ['...', 32], ['..', 26], ['..', 27], ['.', 23], ['.', 23], ['...', 31], ['.', 23],
  ['...', 32], ['.', 22], ['.', 23], ['List ...', 51],
];
const total = columns.reduce((sum, [, w]) => sum + w, 0);
const last = columns.length - 1;
const tail = (...t: string[]) => Object.fromEntries(t.map((v, i) => [last - 7 + i, v]));

const rows: Record<number, string>[] = [
  { 1: '-', 2: '0000', 3: '...', 4: '1', 5: 'REMOTE C...', 8: '$643.50', 9: '$7...', 11: '...', ...tail('...') },
  { 1: '1', 2: '0010', 3: '...', 4: '5', 5: 'SCREW W...', 7: '$1...', 8: '$2.48', 9: '$2...', 11: '...', ...tail('...', '...') },
  { 1: '2', 2: '0054', 3: '...', 4: '2', 5: 'TIE STRA...', 7: '$0...', 8: '$0.50', 9: '$0...', 11: '...', ...tail('...', '...', 'RM1', '...', '$0...', '...', '...', '$0.22') },
  { 1: '3', 2: '0087', 3: '...', 4: 'AR', 5: 'KEY SET I...', 7: '$1...', 8: '$15.24', 9: '$1...', 11: '...', ...tail('...', '...', 'R...', '...', '$1...', '...', '...', '$9.88') },
  { 1: '3', 2: '0087', 3: '...', 4: 'AR', 5: 'KEY SET I...', 7: '$1...', 8: '$15.24', 9: '$1...', 11: '...', ...tail('...', '...', 'R...', '...', '$1...', '...', '...', '$9.88') },
  {},
];
const isRight = (c: number) => c === 3 || c === 8 || c === 11 || (c >= last - 7 && c !== last - 3);

const PartsTable = () => (
  <Grid>
    <colgroup>{columns.map(([, w], i) => <col key={i} style={{ width: `${(w / total) * 100}%` }} />)}</colgroup>
    <thead>
      <tr>{columns.map(([t], i) => <HeadCell key={i}>{i === 0 ? <Centered><NotesIcon /></Centered> : t}</HeadCell>)}</tr>
    </thead>
    <tbody>
      {rows.map((r, ri) => (
        <PartRow key={ri} $current={ri === 0}>
          {columns.map((_, c) => (
            <Cell key={c} $right={isRight(c)} $indent={c === 5 && ri > 0}>
              {c === 0 && r[1] ? <Centered><InfoIcon /></Centered> : r[c]}
            </Cell>
          ))}
        </PartRow>
      ))}
    </tbody>
  </Grid>
);

const crumbs = ['Mercury Marine [November2025]', 'Outboard', 'Electric', '35e 3.5 kW', '[1Q001572 & Up] - Cat.# 90-8M0214869', 'Accessories Remote Control - DTS - Panel Mount - No Trim - 8M0190880'];

export default function App() {
  return (
    <Window>
      <GlobalStyle />
      <TitleBar>
        <LogoIcon />
        <AppName>EzParts Application</AppName>
        <WindowButtons>
          <WindowButton aria-label="Minimize"><svg width="12" height="5" viewBox="0 0 12 5"><path d="M1 1h10v3H1z" fill="#fff" stroke="#4b5a70" strokeWidth=".6" /></svg></WindowButton>
          <WindowButton aria-label="Restore"><svg width="12" height="12" viewBox="0 0 12 12" fill="none" stroke="#fff" strokeWidth="1.800"><path d="M4 3V1h7v7H9M1.500 4h7v7h-7zM4 7h2v1H4z" /></svg></WindowButton>
          <WindowButton $close aria-label="Close"><svg width="12" height="10" viewBox="0 0 12 10"><path d="M2 1l8 8M10 1L2 9" stroke="#5d3a38" strokeWidth="4.400" /><path d="M2 1l8 8M10 1L2 9" stroke="#fff" strokeWidth="2.800" /></svg></WindowButton>
        </WindowButtons>
      </TitleBar>

      <MenuBar>
        {['File', 'View', 'Language', 'Tools', 'Help'].map(m => <MenuItem key={m}>{m}</MenuItem>)}
      </MenuBar>

      <ToolBar>
        <Grip $gap={6} />
        <ToolButton $w={24} aria-label="Back"><NavIcon /></ToolButton>
        <ToolButton $w={32} aria-label="Forward"><NavIcon forward /></ToolButton>
        <ToolButton $w={14} aria-label="History"><Caret /></ToolButton>
        <Divider $h={20} />
        <ToolButton $w={27} aria-label="Search pages"><FindPagesIcon /></ToolButton>
        <Divider $h={20} />
        <ToolButton $w={27} aria-label="Linked notes"><LinkNoteIcon /></ToolButton>
        <ToolButton $w={14} aria-label="Note options"><Caret /></ToolButton>
        <Divider $h={20} />
        <Divider $h={20} />
        <ToolButton $w={24} aria-label="Print"><PrinterIcon /></ToolButton>
        <ToolButton $w={9} aria-label="Print options"><Caret /></ToolButton>
        <ToolButton $w={32} aria-label="Order list"><ChecklistIcon /></ToolButton>
      </ToolBar>

      <Breadcrumb>
        {crumbs.map(c => <React.Fragment key={c}><span>&gt;</span><a href="#top">{c}</a></React.Fragment>)}
      </Breadcrumb>

      <Main>
        <Rail>
          <RailTab $active><span>Main Tree</span></RailTab>
          <RailTab aria-label="Search"><MagnifierIcon /></RailTab>
        </Rail>
        <TreePanel>
          <TreeFrame>
            <Tree role="tree">{nodes.map((n, i) => <TreeItem key={i} node={n} index={i} />)}</Tree>
            <Scroll>
              <ScrollButton aria-label="Scroll up"><Chevron /></ScrollButton>
              <Track $grow={262} />
              <Thumb $grow={283} aria-label="Scroll position"><Ribs /></Thumb>
              <Track $grow={160} />
              <ScrollButton aria-label="Scroll down"><Chevron turn={180} /></ScrollButton>
            </Scroll>
            <Scroll $across>
              <ScrollButton aria-label="Scroll left"><Chevron turn={-90} /></ScrollButton>
              <Thumb $size={30} $across aria-label="Scroll position"><Ribs turn={90} /></Thumb>
              <Track $grow={1} />
              <ScrollButton aria-label="Scroll right"><Chevron turn={90} /></ScrollButton>
            </Scroll>
          </TreeFrame>
        </TreePanel>
        <Splitter />

        <Content>
          <TabStrip>
            <DocumentTab>Accessories Remote Control - DTS - Panel Mount - No Trim - 8M0190880</DocumentTab>
            <TabButtons>
              <TabButton aria-label="Pin"><PinIcon /></TabButton>
              <TabButton $off aria-label="Previous"><Chevron turn={-90} color="#c4bcb6" /></TabButton>
              <TabButton $off aria-label="Next"><Chevron turn={90} color="#c4bcb6" /></TabButton>
              <TabButton aria-label="Close"><svg width="9" height="9" viewBox="0 0 9 9" stroke="#6d5a50" strokeWidth="2.200"><path d="M1 1l7 7M8 1L1 8" /></svg></TabButton>
            </TabButtons>
          </TabStrip>
          <Panel>
            <Viewer>
              <ExplodedView />
              <FloatBar>
                <FloatButton $w={11} aria-label="Collapse">&lt;</FloatButton>
                <FloatButton $w={23} $on aria-label="Select"><PointerIcon /></FloatButton>
                <FloatButton $w={23} aria-label="Pan"><HandIcon /></FloatButton>
                <Divider $h={16} />
                <FloatButton $w={22} aria-label="Zoom in"><MagnifierIcon sign="+" /></FloatButton>
                <FloatButton $w={22} aria-label="Zoom out"><MagnifierIcon sign="-" /></FloatButton>
                <ZoomPicker>
                  <select aria-label="Zoom level"><option>Fit to screen</option></select>
                  <Caret />
                </ZoomPicker>
                <FloatButton $w={15} aria-label="Refresh"><RefreshIcon /></FloatButton>
                <FloatButton $w={29} aria-label="Previous page"><GreenArrow /></FloatButton>
                <FloatButton $w={17} aria-label="Next page"><GreenArrow right /></FloatButton>
              </FloatBar>
            </Viewer>
            <ProfileBar>
              <Grip $gap={7} />
              <ProfileButton>Profile: <Caret /></ProfileButton>
              <button>Edit...</button>
            </ProfileBar>
            <GridFrame>
              <GridClip><PartsTable /></GridClip>
              <Scroll>
                <ScrollButton aria-label="Scroll up"><Chevron /></ScrollButton>
                <Thumb $size={28} aria-label="Scroll position"><Ribs /></Thumb>
                <Track $grow={1} />
                <ScrollButton aria-label="Scroll down"><Chevron turn={180} /></ScrollButton>
              </Scroll>
            </GridFrame>
          </Panel>
        </Content>
      </Main>

      <StatusBar>76799.pdf</StatusBar>
      <Watermark>
        <p>Activate Windows</p>
        <p>Go to Settings to activate Windows.</p>
      </Watermark>
    </Window>
  );
}
